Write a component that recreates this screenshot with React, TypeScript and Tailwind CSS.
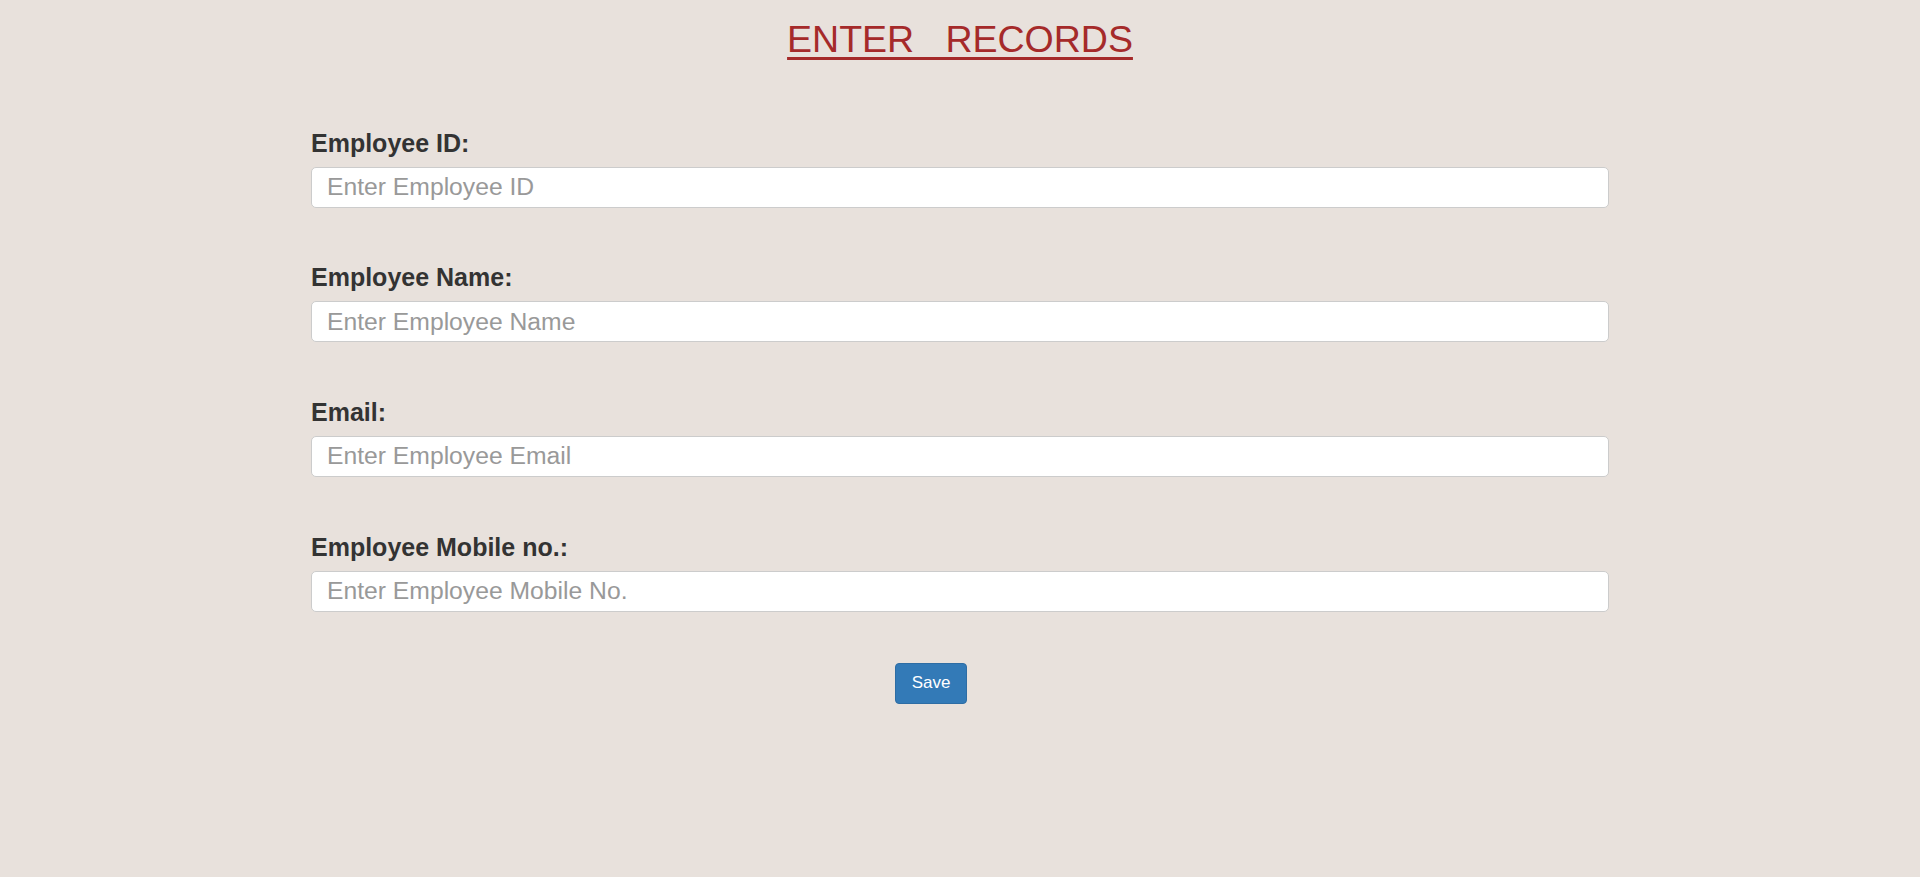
const fields = [
  { label: "Employee ID:", placeholder: "Enter Employee ID", type: "text" },
  { label: "Employee Name:", placeholder: "Enter Employee Name", type: "text" },
  { label: "Email:", placeholder: "Enter Employee Email", type: "email" },
  { label: "Employee Mobile no.:", placeholder: "Enter Employee Mobile No.", type: "text" },
];

const App = () => {
  return (
    <div
      className="min-h-[877px] w-full bg-[#e8e1dc] pt-[21px]"
      style={{ fontFamily: '"Liberation Sans", Arial, sans-serif' }}
    >
      <h1 className="text-center text-[37.5px] leading-none text-[#a52a2a] underline decoration-[3px] underline-offset-[5px]">
        ENTER&nbsp;&nbsp;&nbsp;RECORDS
      </h1>
      <form className="mx-auto mt-[72px] flex w-[1298px] flex-col gap-[57.7px]">
        {fields.map((field, index) => (
          <div key={index} className="flex flex-col gap-[11px]">
            <label className="text-[25px] font-bold leading-none text-[#333333]">{field.label}</label>
            <input
              type={field.type}
              placeholder={field.placeholder}
              className="h-[41px] w-full rounded-[5px] border border-[#cccccc] bg-white pl-[15px] pr-[13px] text-[24.7px] text-[#555] outline-none placeholder:text-[#999999]"
            />
          </div>
        ))}
      </form>
      <div className="mx-auto mt-[51px] w-[1298px]">
        <button
          type="button"
          className="ml-[584px] h-[41px] w-[72px] rounded-[4px] border border-[#2e6da4] bg-[#337ab7] text-[17px] text-white"
        >
          Save
        </button>
      </div>
    </div>
  );
};

export default App;
